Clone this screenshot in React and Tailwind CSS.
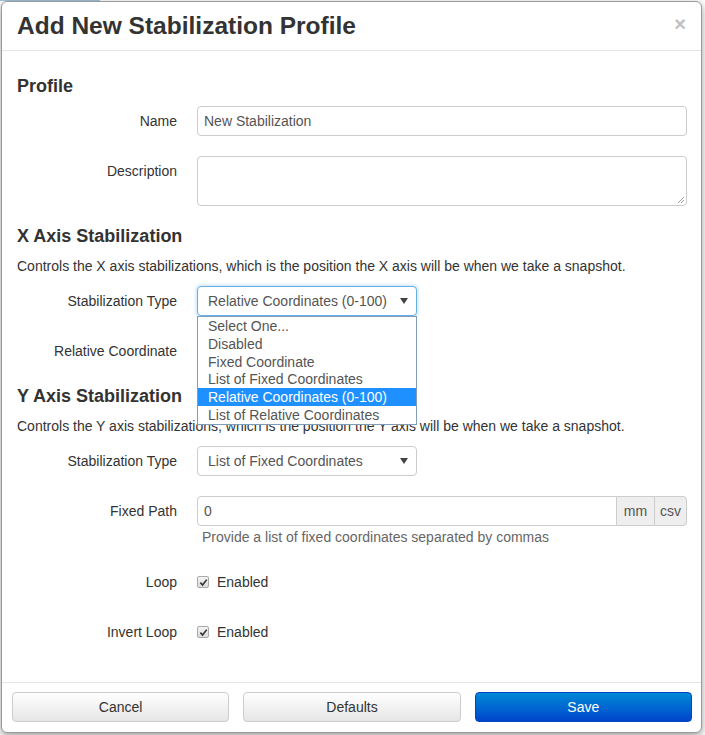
import React from 'react';

const Label = ({ children, top }) => (
    <div className={`w-[160px] shrink-0 text-right text-[14px] text-[#333] leading-[30px] ${top ? 'self-start' : ''}`}>
        {children}
    </div>
);

const Row = ({ label, top, className = '', children }) => (
    <div className={`flex gap-[20px] ${top ? 'items-start' : 'items-center'} ${className}`}>
        <Label top={top}>{label}</Label>
        <div className="flex-1 min-w-0">{children}</div>
    </div>
);

const Caret = () => (
    <span className="w-0 h-0 border-l-[4px] border-r-[4px] border-t-[6px] border-l-transparent border-r-transparent border-t-[#444]" />
);

const SelectBox = ({ value, focused }) => (
    <div
        className={`w-[220px] h-[30px] flex items-center justify-between pl-[10px] pr-[8px] rounded-[4px] bg-white border text-[14px] text-[#555]
        ${focused ? 'border-[#66afe9] shadow-[0_0_4px_rgba(102,175,233,0.6)]' : 'border-[#ccc]'}`}
    >
        <span>{value}</span>
        <Caret />
    </div>
);

const Checkbox = () => (
    <div className="w-[12px] h-[12px] rounded-[2px] border border-[#a9a9a9] bg-linear-to-b from-[#f4f4f4] to-[#dcdcdc] flex items-center justify-center">
        <svg viewBox="0 0 10 10" className="w-[9px] h-[9px]">
            <path d="M1.5 5.2 L4 7.8 L8.6 1.8" fill="none" stroke="#333" strokeWidth="1.8" />
        </svg>
    </div>
);

const options = [
    'Select One...',
    'Disabled',
    'Fixed Coordinate',
    'List of Fixed Coordinates',
    'Relative Coordinates (0-100)',
    'List of Relative Coordinates',
];

export default function App() {
    return (
        <div className="w-[705px] h-[735px] bg-white font-['Liberation_Sans',Arial,sans-serif] text-[#333]">
            <div className="h-[1px] w-[100px] bg-[#9ec3de]" />
            <div className="ml-[1px] w-[701px] h-[732px] flex flex-col bg-white border border-[#9a9a9a] rounded-[6px] shadow-[0_3px_9px_rgba(0,0,0,0.4)]">
                {/* Header */}
                <div className="h-[49px] shrink-0 flex items-center justify-between pl-[15px] pr-[15px] border-b border-[#e5e5e5]">
                    <h3 className="text-[24.5px] font-bold leading-[30px] text-[#333]">Add New Stabilization Profile</h3>
                    <span className="text-[20px] font-bold leading-none text-[#c0c0c0] -mt-[4px]">×</span>
                </div>

                {/* Body */}
                <div className="flex-1 pl-[15px] pr-[14px] pt-[25px]">
                    <h4 className="text-[18px] font-bold leading-[20px]">Profile</h4>
                    <Row label="Name" className="mt-[10px]">
                        <div className="h-[30px] flex items-center px-[6px] rounded-[4px] border border-[#ccc] text-[14px] text-[#555]">
                            New Stabilization
                        </div>
                    </Row>
                    <Row label="Description" top className="mt-[20px]">
                        <div className="relative h-[50px] rounded-[4px] border border-[#ccc]">
                            <svg viewBox="0 0 8 8" className="absolute right-[1px] bottom-[1px] w-[8px] h-[8px]">
                                <path d="M7 1 L1 7 M7 4 L4 7" stroke="#888" strokeWidth="0.8" />
                            </svg>
                        </div>
                    </Row>

                    <h4 className="mt-[20px] text-[18px] font-bold leading-[20px]">X Axis Stabilization</h4>
                    <p className="mt-[10px] text-[14px] leading-[20px]">
                        Controls the X axis stabilizations, which is the position the X axis will be when we take a snapshot.
                    </p>
                    <Row label="Stabilization Type" className="mt-[10px]">
                        <div className="relative w-[220px]">
                            <SelectBox value="Relative Coordinates (0-100)" focused />
                            <div className="absolute z-10 left-0 top-[30px] w-[220px] bg-white border border-[#7f9db9]">
                                {options.map((o, i) => (
                                    <div
                                        key={o}
                                        className={`h-[17.8px] leading-[18px] pl-[10px] text-[14px] ${i === 4 ? 'bg-[#1e90ff] text-white' : 'text-[#555]'}`}
                                    >
                                        {o}
                                    </div>
                                ))}
                            </div>
                        </div>
                    </Row>
                    <Row label="Relative Coordinate" className="mt-[20px]">
                        <div className="w-[220px] h-[30px] rounded-[4px] border border-[#ccc]" />
                    </Row>

                    <h4 className="mt-[20px] text-[18px] font-bold leading-[20px]">Y Axis Stabilization</h4>
                    <p className="mt-[10px] text-[14px] leading-[20px]">
                        Controls the Y axis stabilizations, which is the position the Y axis will be when we take a snapshot.
                    </p>
                    <Row label="Stabilization Type" className="mt-[10px]">
                        <SelectBox value="List of Fixed Coordinates" />
                    </Row>
                    <Row label="Fixed Path" top className="mt-[20px]">
                        <div className="flex h-[30px] text-[14px]">
                            <div className="flex-1 flex items-center px-[6px] rounded-l-[4px] border border-[#ccc] text-[#555]">0</div>
                            <div className="w-[37px] flex items-center justify-center bg-[#eee] border-y border-[#ccc] text-[#555]">mm</div>
                            <div className="w-[33px] flex items-center justify-center bg-[#eee] border border-[#ccc] rounded-r-[4px] text-[#555]">csv</div>
                        </div>
                        <p className="mt-[1px] pl-[5px] text-[14px] leading-[20px] text-[#666]">
                            Provide a list of fixed coordinates separated by commas
                        </p>
                    </Row>
                    <Row label="Loop" className="mt-[20px]">
                        <div className="flex items-center gap-[8px] text-[14px]">
                            <Checkbox />
                            <span>Enabled</span>
                        </div>
                    </Row>
                    <Row label="Invert Loop" className="mt-[20px]">
                        <div className="flex items-center gap-[8px] text-[14px]">
                            <Checkbox />
                            <span>Enabled</span>
                        </div>
                    </Row>
                </div>

                {/* Footer */}
                <div className="h-[50px] shrink-0 border-t border-[#e5e5e5] grid grid-cols-3 gap-[14px] pl-[10px] pr-[9px] pt-[9px] pb-[9px]">
                    <button className="h-[30px] rounded-[4px] border border-[#ccc] bg-linear-to-b from-white to-[#e6e6e6] text-[14px] text-[#333]">
                        Cancel
                    </button>
                    <button className="h-[30px] rounded-[4px] border border-[#ccc] bg-linear-to-b from-white to-[#e6e6e6] text-[14px] text-[#333]">
                        Defaults
                    </button>
                    <button className="h-[30px] rounded-[4px] border border-[#0045c4] bg-linear-to-b from-[#0088d6] to-[#0044cc] text-[14px] text-white">
                        Save
                    </button>
                </div>
            </div>
        </div>
    );
}
